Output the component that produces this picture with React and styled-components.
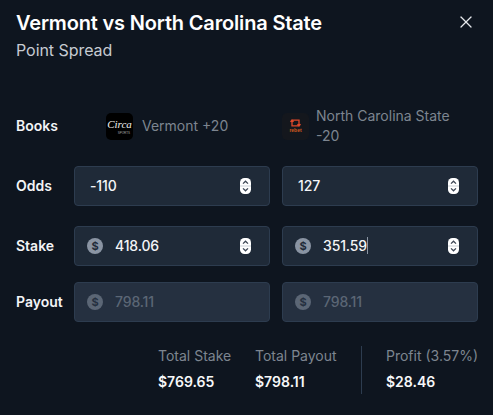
import React from "react";
import styled, { createGlobalStyle } from "styled-components";
import { X } from "lucide-react";

const Global = createGlobalStyle`
  html, body { margin: 0; padding: 0; background: #0e151f; }
  body { font-family: Inter, "Noto Sans", sans-serif; -webkit-font-smoothing: antialiased; }
  * { box-sizing: border-box; }
`;

const Modal = styled.div`
  width: 493px;
  height: 415px;
  background: #0e151f;
  padding: 11px 15px 0 16px;
  display: flex;
  flex-direction: column;
  overflow: hidden;
`;
const Header = styled.header`
  display: flex;
  justify-content: space-between;
  align-items: flex-start;
  height: 95px;
`;
const Title = styled.h1`
  margin: 0;
  font-size: 20px;
  line-height: 24px;
  font-weight: 600;
  letter-spacing: -0.17px;
  color: #fff;
`;
const Subtitle = styled.p`
  margin: 5px 0 0;
  font-size: 16px;
  line-height: 20px;
  letter-spacing: -0.05px;
  color: #c6cbd2;
`;
const Close = styled.button`
  border: 0;
  background: none;
  padding: 0;
  margin: 1px 2px 0 0;
  color: #e6e8ec;
  display: flex;
  width: 20px;
  height: 20px;
`;
const Form = styled.div`
  display: grid;
  grid-template-columns: 46px 196px 196px;
  column-gap: 12px;
  align-items: center;
`;
const RowLabel = styled.div`
  font-size: 14px;
  line-height: 20px;
  font-weight: 600;
  color: #f3f4f6;
  margin-bottom: ${p => p.$mb || 0}px;
`;
const Book = styled.div`
  display: flex;
  align-items: center;
  gap: ${p => p.$gap}px;
  padding-left: ${p => p.$pl}px;
  height: 40px;
  margin-bottom: 20px;
`;
const BookName = styled.span`
  font-size: 14px;
  line-height: 20px;
  color: #7d8590;
`;
const Logo = styled.div`
  width: 27px;
  height: 27px;
  flex: none;
  border-radius: 5px;
  background: ${p => p.$bg};
  display: flex;
  flex-direction: column;
  align-items: center;
  justify-content: center;
`;
const CircaWord = styled.span`
  font-family: "Liberation Serif", serif;
  font-style: italic;
  font-size: 11px;
  line-height: 13px;
  color: #f2f2f2;
`;
const CircaSub = styled.span`
  font-family: "Liberation Sans", sans-serif;
  font-size: 3px;
  line-height: 4px;
  color: #aaa;
  align-self: flex-end;
  margin-right: 3px;
`;
const RebetWord = styled.span`
  font-family: "Liberation Sans", sans-serif;
  font-size: 5px;
  line-height: 6px;
  font-weight: 700;
  color: #d0591f;
`;
const Field = styled.div`
  height: 40px;
  border: 1px solid #2d3c4f;
  border-radius: 4px;
  background: ${p => (p.$disabled ? "#253040" : "#1f2a38")};
  display: flex;
  align-items: center;
  padding: 0 12px 0 ${p => (p.$icon ? 12 : 15)}px;
  margin-bottom: ${p => p.$mb || 0}px;
`;
const Value = styled.span`
  flex: 1;
  font-size: 14px;
  line-height: 20px;
  font-weight: 500;
  letter-spacing: -0.15px;
  color: ${p => (p.$disabled ? "#5b6675" : "#f4f5f7")};
  margin-left: ${p => (p.$icon ? 12 : 0)}px;
`;
const Caret = styled.span`
  display: inline-block;
  width: 1px;
  height: 17px;
  background: #8b95a3;
  vertical-align: -3px;
`;
const DollarIcon = styled.span`
  width: 16px;
  height: 16px;
  flex: none;
  border-radius: 50%;
  background: ${p => (p.$disabled ? "#5b6675" : "#8a94a3")};
  color: ${p => (p.$disabled ? "#253040" : "#1f2a38")};
  font-size: 11px;
  line-height: 16px;
  font-weight: 700;
  text-align: center;
`;
const Spinner = () => (
  <svg width="11" height="16" viewBox="0 0 11 16" style={{ marginRight: 6, flex: "none" }}>
    <rect width="11" height="16" rx="4.5" fill="#fff" />
    <rect y="7.4" width="11" height="1.2" fill="#d5d9de" />
    <path d="M3 5.6 5.5 3.2 8 5.6M3 10.4 5.5 12.8 8 10.4" fill="none" stroke="#3c4654" strokeWidth="1.3" />
  </svg>
);
const Summary = styled.div`
  display: flex;
  margin: 24px 0 0 142px;
  height: 48px;
`;
const Stat = styled.div`
  width: ${p => p.$w}px;
  flex: none;
  display: flex;
  flex-direction: column;
  gap: 6px;
`;
const StatLabel = styled.span`
  font-size: 14px;
  line-height: 20px;
  color: #7d8590;
`;
const StatValue = styled.span`
  font-size: 14px;
  line-height: 20px;
  font-weight: 600;
  color: #f7f8f9;
`;
const Divider = styled.div`
  width: 1px;
  height: 48px;
  flex: none;
  background: #2d3c4f;
  margin-right: 24px;
  margin-left: 9px;
`;

const Input = ({ value, icon, disabled, caret, spin = true, mb }) => (
  <Field $icon={icon} $disabled={disabled} $mb={mb}>
    {icon && <DollarIcon $disabled={disabled}>$</DollarIcon>}
    <Value $icon={icon} $disabled={disabled}>
      {value}
      {caret && <Caret />}
    </Value>
    {spin && <Spinner />}
  </Field>
);

export default function App() {
  return (
    <Modal>
      <Global />
      <Header>
        <div>
          <Title>Vermont vs North Carolina State</Title>
          <Subtitle>Point Spread</Subtitle>
        </div>
        <Close aria-label="Close">
          <X size={20} strokeWidth={1.5} />
        </Close>
      </Header>
      <Form>
        <RowLabel $mb={20}>Books</RowLabel>
        <Book $gap={9} $pl={32}>
          <Logo $bg="#000">
            <CircaWord>Circa</CircaWord>
            <CircaSub>SPORTS</CircaSub>
          </Logo>
          <BookName>Vermont +20</BookName>
        </Book>
        <Book $gap={7} $pl={0}>
          <Logo $bg="#14171d">
            <svg width="11" height="8" viewBox="0 0 11 8">
              <path d="M2 1.2h7v5.6H2zM0.5 2.8 2 1 3.5 2.8M7.5 5.2 9 7l1.5-1.8" fill="none" stroke="#e0492a" strokeWidth="1.3" />
            </svg>
            <RebetWord>rebet</RebetWord>
          </Logo>
          <BookName>North Carolina State<br />-20</BookName>
        </Book>

        <RowLabel $mb={20}>Odds</RowLabel>
        <Input value="-110" mb={20} />
        <Input value="127" mb={20} />

        <RowLabel $mb={16}>Stake</RowLabel>
        <Input value="418.06" icon mb={16} />
        <Input value="351.59" icon caret mb={16} />

        <RowLabel>Payout</RowLabel>
        <Input value="798.11" icon disabled spin={false} />
        <Input value="798.11" icon disabled spin={false} />
      </Form>
      <Summary>
        <Stat $w={97}>
          <StatLabel>Total Stake</StatLabel>
          <StatValue>$769.65</StatValue>
        </Stat>
        <Stat $w={97}>
          <StatLabel>Total Payout</StatLabel>
          <StatValue>$798.11</StatValue>
        </Stat>
        <Divider />
        <Stat $w={100}>
          <StatLabel>Profit (3.57%)</StatLabel>
          <StatValue>$28.46</StatValue>
        </Stat>
      </Summary>
    </Modal>
  );
}
